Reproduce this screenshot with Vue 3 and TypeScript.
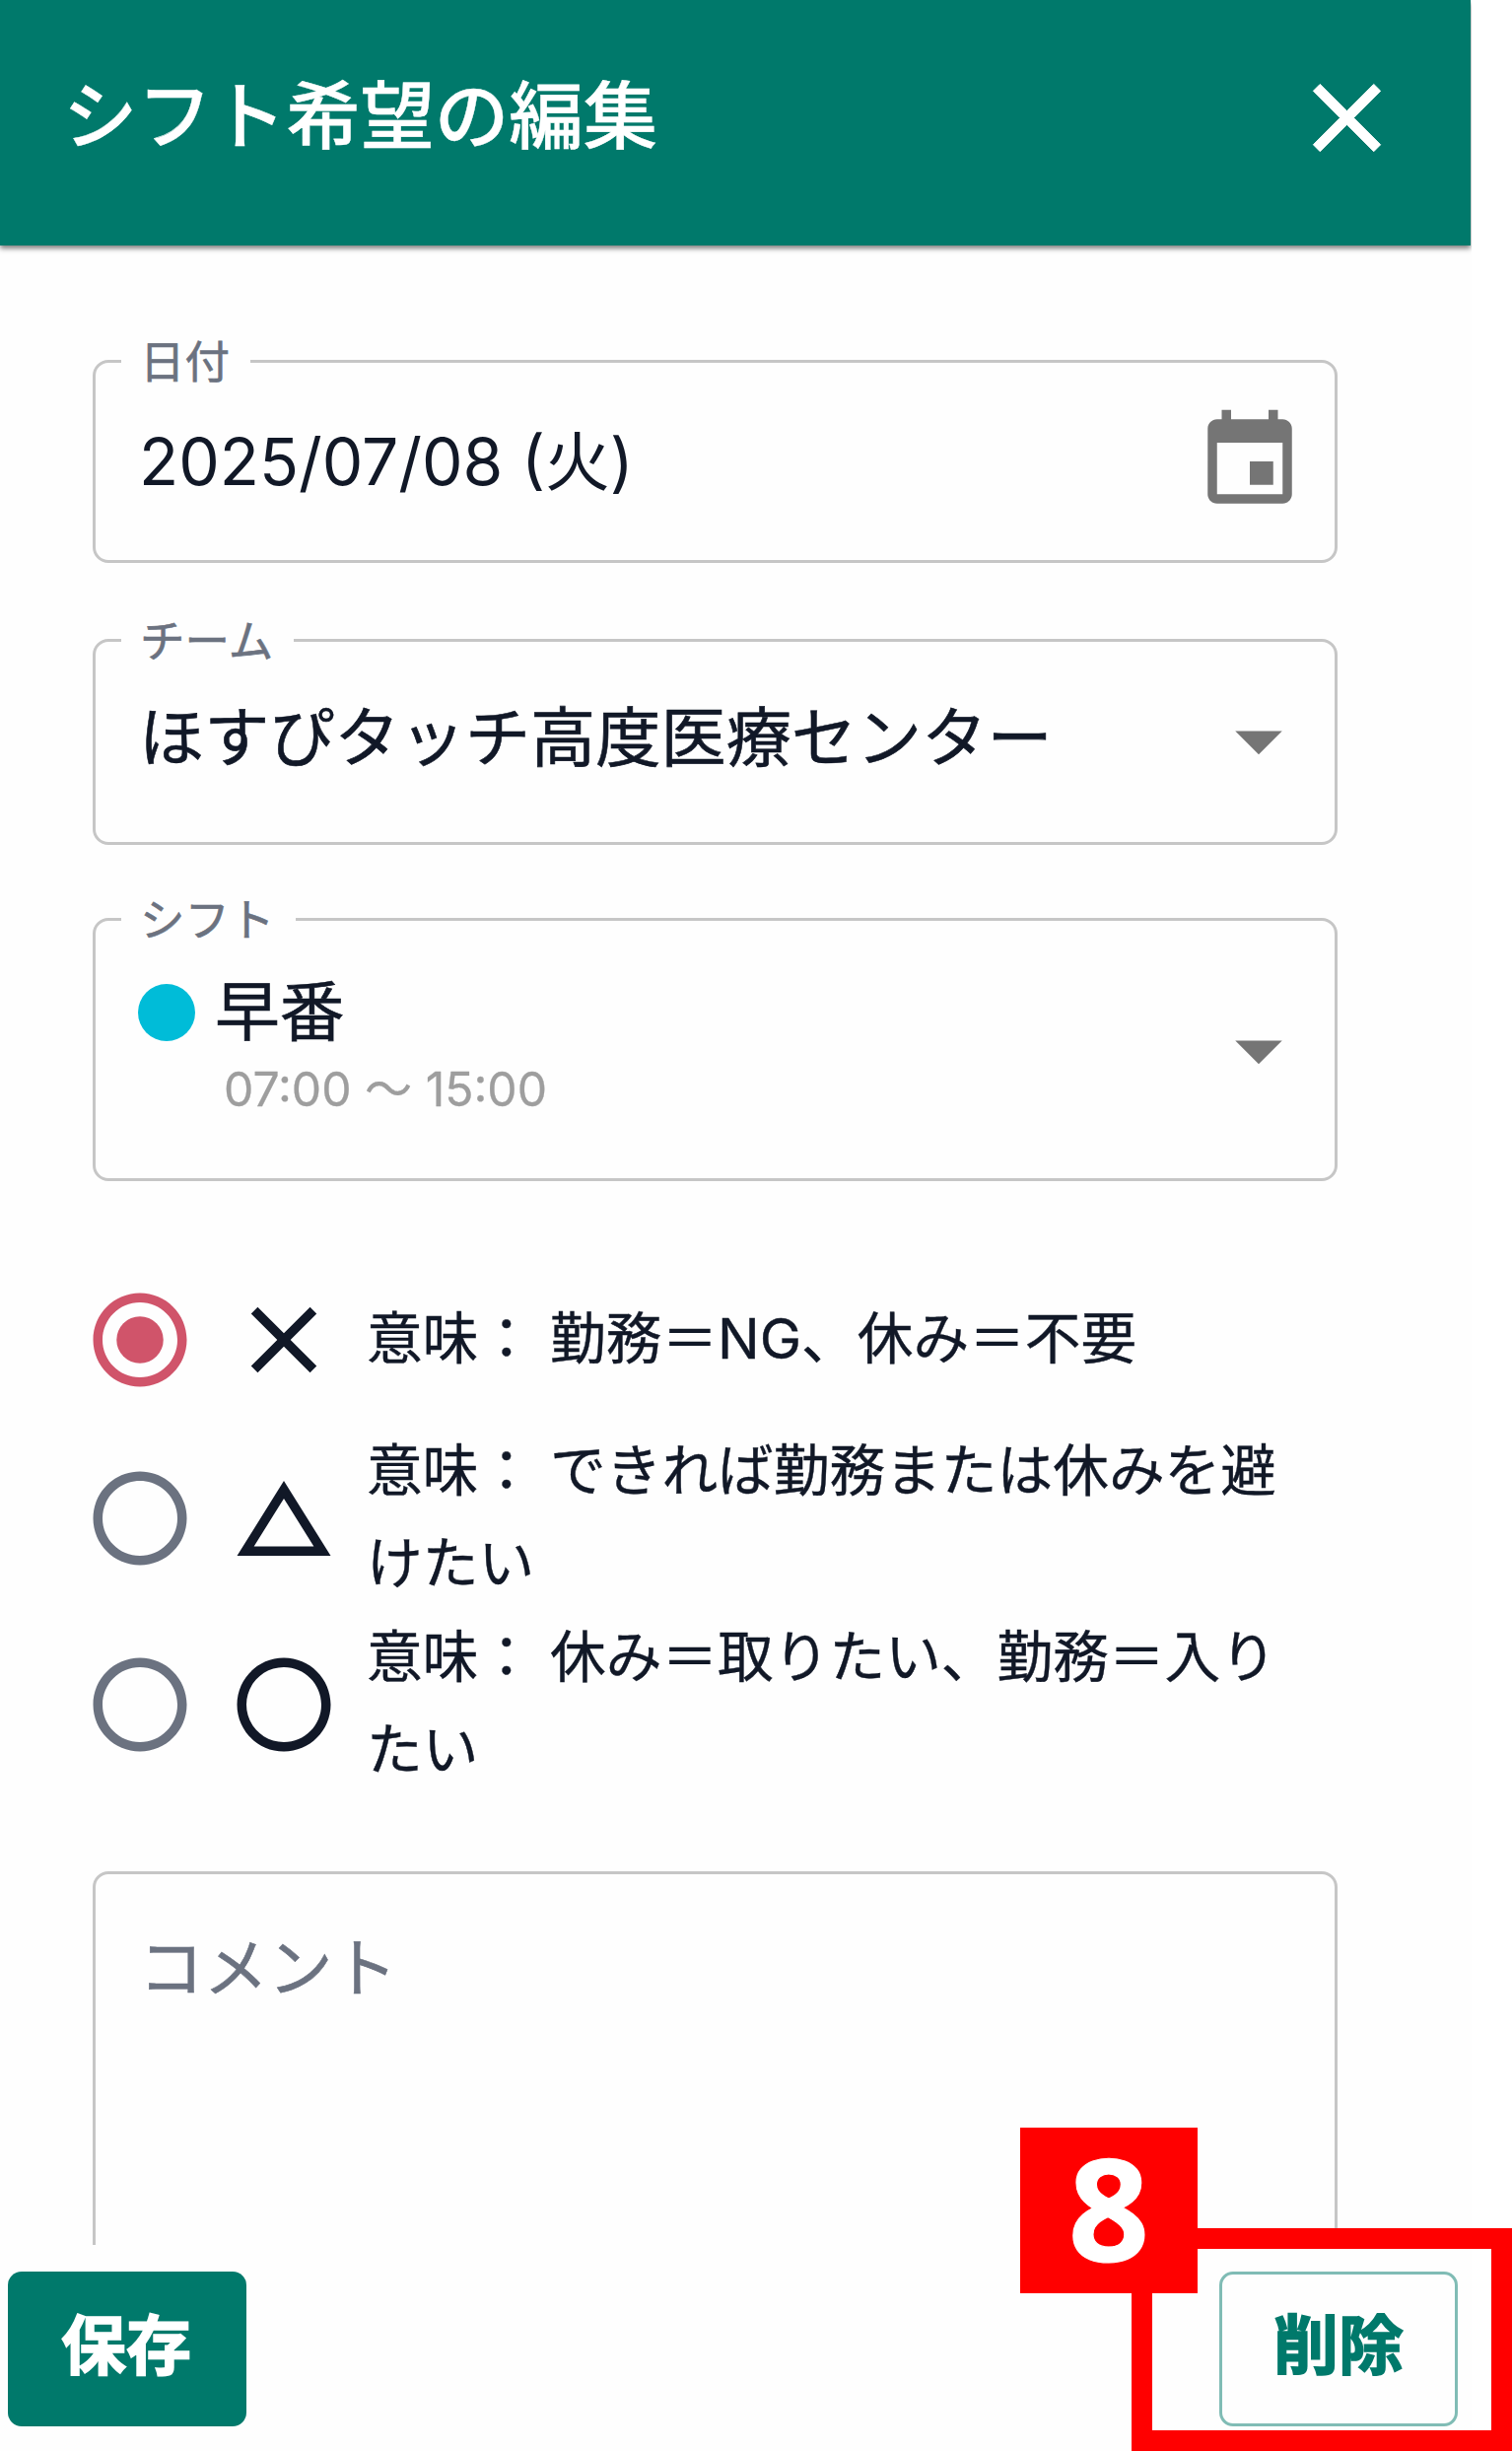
<script setup lang="ts">
import { ref } from 'vue'

type Mark = 'cross' | 'triangle' | 'circle'

interface Wish {
  mark: Mark
  lines: string[]
}

const wishes: Wish[] = [
  { mark: 'cross', lines: ['意味： 勤務＝NG、休み＝不要'] },
  { mark: 'triangle', lines: ['意味： できれば勤務または休みを避', 'けたい'] },
  { mark: 'circle', lines: ['意味： 休み＝取りたい、勤務＝入り', 'たい'] },
]

const paths: Record<Mark, string> = {
  cross:
    'M19 6.41 17.59 5 12 10.59 6.41 5 5 6.41 10.59 12 5 17.59 6.41 19 12 13.41 17.59 19 19 17.59 13.41 12z',
  triangle: 'M12 7.77 18.39 18H5.61L12 7.77M12 4 2 20h20L12 4z',
  circle:
    'M12 2C6.48 2 2 6.48 2 12s4.48 10 10 10 10-4.48 10-10S17.52 2 12 2zm0 18c-4.42 0-8-3.58-8-8s3.58-8 8-8 8 3.58 8 8-3.58 8-8 8z',
}

const selected = ref<Mark>('cross')
</script>

<template>
  <div class="page">
    <div class="panel">
      <header class="bar">
        <h1 class="title">シフト希望の編集</h1>
        <svg class="close" viewBox="0 0 24 24"><path :d="paths.cross" /></svg>
      </header>

      <main class="form">
        <div class="field date">
          <span class="label">日付</span>
          <span class="value">2025/07/08 (火)</span>
          <svg class="icon calendar" viewBox="0 0 24 24">
            <path
              d="M17 12h-5v5h5v-5zM16 1v2H8V1H6v2H5c-1.11 0-1.99.9-1.99 2L3 19c0 1.1.89 2 2 2h14c1.1 0 2-.9 2-2V5c0-1.1-.9-2-2-2h-1V1h-2zm3 18H5V8h14v11z"
            />
          </svg>
        </div>

        <div class="field team">
          <span class="label">チーム</span>
          <span class="value">ほすぴタッチ高度医療センター</span>
          <svg class="icon arrow" viewBox="0 0 24 24"><path d="M7 10l5 5 5-5z" /></svg>
        </div>

        <div class="field shift">
          <span class="label">シフト</span>
          <div class="shift-body">
            <div class="shift-name"><i class="dot"></i><span>早番</span></div>
            <div class="shift-time">07:00 〜 15:00</div>
          </div>
          <svg class="icon arrow" viewBox="0 0 24 24"><path d="M7 10l5 5 5-5z" /></svg>
        </div>

        <div class="wishes">
          <div v-for="w in wishes" :key="w.mark" class="wish" @click="selected = w.mark">
            <svg class="radio" :class="{ on: selected === w.mark }" viewBox="0 0 24 24">
              <path :d="paths.circle" />
              <circle v-if="selected === w.mark" cx="12" cy="12" r="5" />
            </svg>
            <svg class="mark" viewBox="0 0 24 24"><path :d="paths[w.mark]" /></svg>
            <div class="meaning">
              <div v-for="l in w.lines" :key="l">{{ l }}</div>
            </div>
          </div>
        </div>

        <div class="comment"><span>コメント</span></div>
      </main>

      <footer class="actions">
        <button class="btn save">保存</button>
        <button class="btn delete">削除</button>
      </footer>
    </div>

    <div class="frame"></div>
    <div class="badge">8</div>
  </div>
</template>

<style>
body {
  margin: 0;
  background: #fff;
}
</style>

<style scoped>
.page {
  position: relative;
  width: 1534px;
  height: 2486px;
  overflow: hidden;
  background: #fff;
  font-family: Inter, 'Noto Sans CJK JP', sans-serif;
  color: #111827;
  -webkit-text-stroke-width: 0.6px;
}
.panel {
  display: flex;
  flex-direction: column;
  width: 1493px;
  height: 2486px;
  background: #fefefe;
  overflow: hidden;
}
.bar {
  display: flex;
  align-items: center;
  justify-content: space-between;
  box-sizing: border-box;
  flex: none;
  width: 1492px;
  height: 249px;
  padding: 0 67px 11px 64px;
  background: #00796b;
  box-shadow: 0 3px 5px rgba(0, 0, 0, 0.5);
  color: #fff;
}
.title {
  margin: 0;
  padding-bottom: 2px;
  font-size: 75.4px;
  line-height: 110px;
  font-weight: 500;
  white-space: nowrap;
  -webkit-text-stroke-width: 0.4px;
}
.close {
  width: 117px;
  height: 117px;
  fill: #fff;
  stroke: #fff;
  stroke-width: 0.2;
}
.form {
  flex: none;
  height: 2028px;
  box-sizing: border-box;
  padding: 116px 136px 0 94px;
  overflow: hidden;
}
.field {
  position: relative;
  display: flex;
  align-items: center;
  justify-content: space-between;
  box-sizing: border-box;
  border: 3px solid #c6c6c6;
  border-radius: 16px;
  padding: 0 29px 0 44px;
}
.date {
  height: 206px;
}
.team {
  height: 209px;
  margin-top: 77px;
  padding-right: 20px;
}
.shift {
  height: 267px;
  margin-top: 74px;
  padding: 0 20px 0 43px;
}
.label {
  position: absolute;
  left: 26px;
  top: -33px;
  padding: 0 21px 0 19px;
  background: #fefefe;
  color: #6b7280;
  font-size: 45.5px;
  line-height: 66px;
  white-space: nowrap;
}
.value {
  font-size: 66.2px;
  line-height: 94px;
  white-space: nowrap;
}
.date .value {
  font-size: 65.9px;
  -webkit-text-stroke-width: 0;
}
.icon {
  flex: none;
  width: 114px;
  height: 114px;
  fill: #757575;
}
.team .icon {
  margin-bottom: 4px;
}
.team .value {
  margin-bottom: 10px;
}
.shift-body {
  display: flex;
  flex-direction: column;
  margin-bottom: 14px;
}
.shift-name {
  display: flex;
  align-items: center;
  gap: 20px;
  font-size: 65.8px;
  line-height: 94px;
}
.shift-name span {
  padding-bottom: 2px;
}
.dot {
  width: 58px;
  height: 58px;
  border-radius: 50%;
  background: #00bcd8;
}
.shift-time {
  margin: -2px 0 0 87px;
  font-size: 48.1px;
  line-height: 64px;
  color: #9e9e9e;
  -webkit-text-stroke-width: 0.3px;
}
.wishes {
  display: flex;
  flex-direction: column;
  margin-top: 74px;
}
.wish {
  display: flex;
  align-items: center;
  height: 189px;
  margin-left: -9px;
}
.wish:first-child {
  height: 173px;
}
.radio {
  flex: none;
  width: 114px;
  height: 114px;
  fill: #6b7280;
}
.radio.on {
  fill: #d0546a;
}
.mark {
  flex: none;
  width: 114px;
  height: 114px;
  margin: 0 27px 0 32px;
  fill: #111827;
}
.meaning {
  padding-bottom: 2px;
  font-size: 56.7px;
  line-height: 94px;
  white-space: nowrap;
  -webkit-text-stroke-width: 0.4px;
}
.comment {
  box-sizing: border-box;
  height: 480px;
  margin-top: 75px;
  border: 3px solid #c6c6c6;
  border-radius: 16px;
  padding: 49px 44px;
  color: #6b7280;
  font-size: 65.5px;
  line-height: 94px;
}
.actions {
  display: flex;
  justify-content: space-between;
  padding: 27px 14px 0 8px;
}
.btn {
  box-sizing: border-box;
  width: 242px;
  height: 157px;
  padding: 0 2px 18px 0;
  border: 0;
  border-radius: 14px;
  font-family: 'Noto Sans CJK JP', sans-serif;
  font-size: 66px;
  line-height: 94px;
  font-weight: 700;
  -webkit-text-stroke-width: 1.6px;
}
.save {
  background: #00796b;
  color: #fff;
}
.delete {
  padding-right: 0;
  background: transparent;
  border: 3px solid #80bcb5;
  color: #00796b;
}
.frame {
  position: absolute;
  left: 1148px;
  top: 2260px;
  width: 386px;
  height: 226px;
  box-sizing: border-box;
  border: 21px solid #f00;
}
.badge {
  position: absolute;
  left: 1035px;
  top: 2158px;
  width: 180px;
  height: 168px;
  background: #f00;
  color: #fff;
  font-family: 'Noto Sans', sans-serif;
  font-size: 144px;
  font-weight: 700;
  line-height: 160px;
  text-align: center;
  -webkit-text-stroke-width: 1px;
}
</style>
